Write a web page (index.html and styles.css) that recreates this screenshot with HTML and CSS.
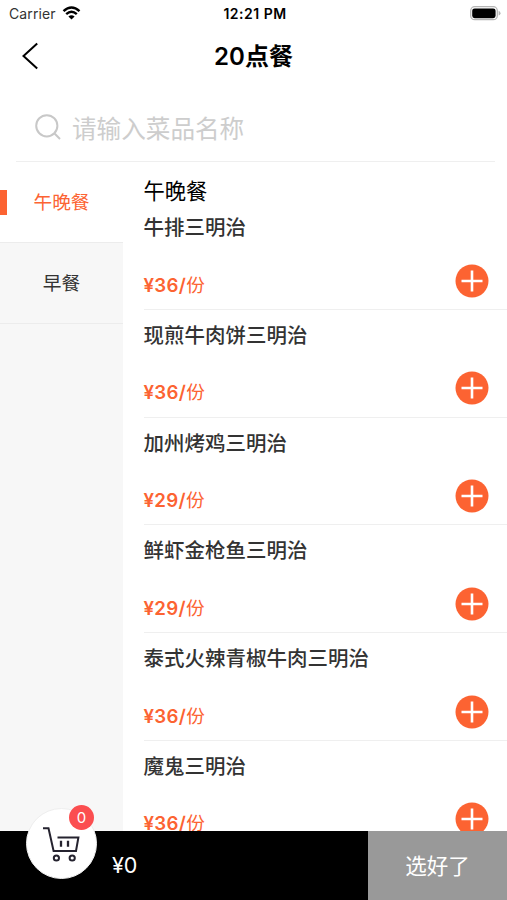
FILE: index.html
```
<!DOCTYPE html>
<html lang="zh-CN">
<head>
    <meta charset="UTF-8">
    <meta name="viewport" content="width=device-width, initial-scale=1.0">
    <title>20点餐</title>
    <link rel="stylesheet" href="styles.css">
</head>
<body>
    <!-- Status Bar -->
    <div class="status-bar">
        <div class="carrier">
            <span>Carrier</span>
            <svg width="19" height="14" viewBox="0 0 18 14" fill="none" stroke="#000" stroke-width="2.4">
                <path d="M1 5.2 Q9 -2.2 17 5.2"/>
                <path d="M3.7 8.2 Q9 3.2 14.3 8.2"/>
                <path d="M9 13.6 L5.9 10.5 Q9 7.9 12.1 10.5 Z" fill="#000" stroke="none"/>
            </svg>
        </div>
        <span class="time">12:21 PM</span>
        <svg class="battery" width="31" height="15" viewBox="0 0 31 15">
            <rect x="0.7" y="0.7" width="26.6" height="13" rx="4" fill="#fff" stroke="#b5b5b5" stroke-width="1.3"/>
            <rect x="2.2" y="2.4" width="23.4" height="9.8" rx="2.4" fill="#000"/>
            <path d="M28.6 4.8 Q30.5 5.5 30.5 7.2 Q30.5 8.9 28.6 9.6 Z" fill="#b5b5b5"/>
        </svg>
    </div>

    <!-- Navigation Bar -->
    <div class="nav-bar">
        <svg class="back" width="17" height="28" viewBox="0 0 17 28" fill="none" stroke="#000" stroke-width="2">
            <path d="M16.2 1.5 L2.5 14 L16.2 26.5"/>
        </svg>
        <h1>20点餐</h1>
    </div>

    <!-- Search -->
    <div class="search">
        <svg width="26" height="26" viewBox="0 0 26 26" fill="none" stroke="#c8c8c8" stroke-width="2">
            <circle cx="11.8" cy="11.8" r="10.6"/>
            <path d="M19.3 19.3 L25 25"/>
        </svg>
        <span>请输入菜品名称</span>
    </div>

    <!-- Menu -->
    <div class="content">
        <div class="sidebar">
            <div class="category active">午晚餐</div>
            <div class="category">早餐</div>
        </div>
        <div class="menu">
            <h2>午晚餐</h2>
            <div id="dishes"></div>
        </div>
    </div>

    <!-- Cart Bar -->
    <div class="cart-bar">
        <div class="cart">
            <svg width="38" height="36" viewBox="0 0 38 36" fill="none" stroke="#25232f" stroke-width="2">
                <path d="M0 1.2 H5.5 L10.6 24 H33 L35.4 10.4 H14.5"/>
                <path d="M18 13.8 V19.8 M25 13.8 V19.8" stroke-width="2.3"/>
                <circle cx="13.4" cy="31" r="2.6"/>
                <circle cx="29.2" cy="31" r="2.6"/>
            </svg>
            <span class="badge">0</span>
        </div>
        <span class="total">¥0</span>
        <button class="submit">选好了</button>
    </div>

    <script>
        const dishes = [
            { name: "牛排三明治", price: 36 },
            { name: "现煎牛肉饼三明治", price: 36 },
            { name: "加州烤鸡三明治", price: 29 },
            { name: "鲜虾金枪鱼三明治", price: 29 },
            { name: "泰式火辣青椒牛肉三明治", price: 36 },
            { name: "魔鬼三明治", price: 36 }
        ];

        document.getElementById("dishes").innerHTML = dishes.map(dish => `
            <div class="dish">
                <div class="name">${dish.name}</div>
                <div class="price"><b>¥${dish.price}/</b>份</div>
                <svg class="add" width="34" height="34" viewBox="0 0 34 34">
                    <circle cx="17" cy="17" r="16.5" fill="#fc6332"/>
                    <path d="M6.5 17 H27.5 M17 6.5 V27.5" stroke="#fff" stroke-width="2.6"/>
                </svg>
            </div>`).join("");
    </script>
</body>
</html>
```

FILE: styles.css
```
* {
    box-sizing: border-box;
}
body {
    margin: 0;
    height: 900px;
    display: flex;
    flex-direction: column;
    overflow: hidden;
    font-family: Inter, "Noto Sans CJK SC", sans-serif;
    background-color: #fff;
    color: #000;
}
svg {
    display: block;
    flex: none;
}
/* Status Bar */
.status-bar {
    height: 28px;
    flex: none;
    display: grid;
    grid-template-columns: 1fr auto 1fr;
    align-items: center;
    padding: 0 6px 2px 9px;
    font-size: 14px;
}
.carrier {
    display: flex;
    align-items: center;
    gap: 6px;
    letter-spacing: 0.1px;
    color: #333;
}
.time {
    font-size: 14px;
    font-weight: 600;
    letter-spacing: 0.5px;
    padding-top: 1px;
}
.battery {
    justify-self: end;
}
/* Navigation Bar */
.nav-bar {
    height: 56px;
    flex: none;
    display: grid;
    grid-template-columns: 1fr auto 1fr;
    align-items: center;
    padding: 0 21px;
}
.nav-bar h1 {
    grid-column: 2;
    margin: 0;
    padding-top: 2px;
    font-size: 24px;
    line-height: 32px;
    font-weight: 600;
}
/* Search */
.search {
    height: 78px;
    flex: none;
    display: flex;
    align-items: center;
    gap: 11px;
    margin: 0 12px 0 16px;
    padding: 9px 0 0 19px;
    border-bottom: 1px solid #efefef;
    font-size: 24.6px;
    font-weight: 400;
    color: #cdcdcd;
}
/* Menu */
.content {
    flex: 1;
    min-height: 0;
    display: flex;
    overflow: hidden;
}
.sidebar {
    width: 123px;
    flex: none;
    background-color: #f7f7f7;
}
.category {
    height: 81px;
    display: flex;
    align-items: center;
    justify-content: center;
    padding-bottom: 3px;
    border-bottom: 1px solid #ececec;
    font-size: 18.7px;
    color: #333;
}
.category.active {
    background: linear-gradient(#fc6332, #fc6332) 0 28px / 7px 25px no-repeat #fff;
    color: #fc6332;
}
.menu {
    flex: 1;
    padding: 13px 0 0 20.5px;
}
.menu h2 {
    margin: 0;
    height: 27px;
    font-size: 21.3px;
    line-height: 32px;
    font-weight: 400;
}
.dish {
    height: 107.8px;
    display: grid;
    grid-template: 50px 1fr / 1fr auto;
    padding-right: 18px;
    border-bottom: 1px solid #efefef;
}
.name {
    grid-column: 1 / 3;
    font-size: 20.5px;
    line-height: 51px;
    font-weight: 500;
    color: #333;
}
.price {
    margin-top: 19.5px;
    font-size: 18.7px;
    line-height: 28px;
    letter-spacing: 0.3px;
    color: #fc6332;
}
.price b {
    font-weight: 600;
}
.add {
    margin-top: 11.5px;
}
/* Cart Bar */
.cart-bar {
    height: 69px;
    flex: none;
    display: flex;
    align-items: center;
    background-color: #000;
    color: #fff;
}
.cart {
    position: relative;
    top: -22px;
    width: 71px;
    height: 71px;
    flex: none;
    margin-left: 26px;
    padding: 18px 0 0 16px;
    border: 1px solid #eee;
    border-radius: 50%;
    background-color: #fff;
}
.badge {
    position: absolute;
    top: -4px;
    right: 2px;
    width: 25px;
    height: 25px;
    border-radius: 50%;
    background-color: #fb4e50;
    font-size: 15px;
    line-height: 25px;
    text-align: center;
}
.total {
    flex: 1;
    margin-left: 15px;
    padding-bottom: 2px;
    font-size: 21.5px;
}
.submit {
    width: 139px;
    height: 100%;
    padding: 0 0 2px;
    border: 0;
    background-color: #999;
    color: #fff;
    font-family: inherit;
    font-size: 21.5px;
}
```
